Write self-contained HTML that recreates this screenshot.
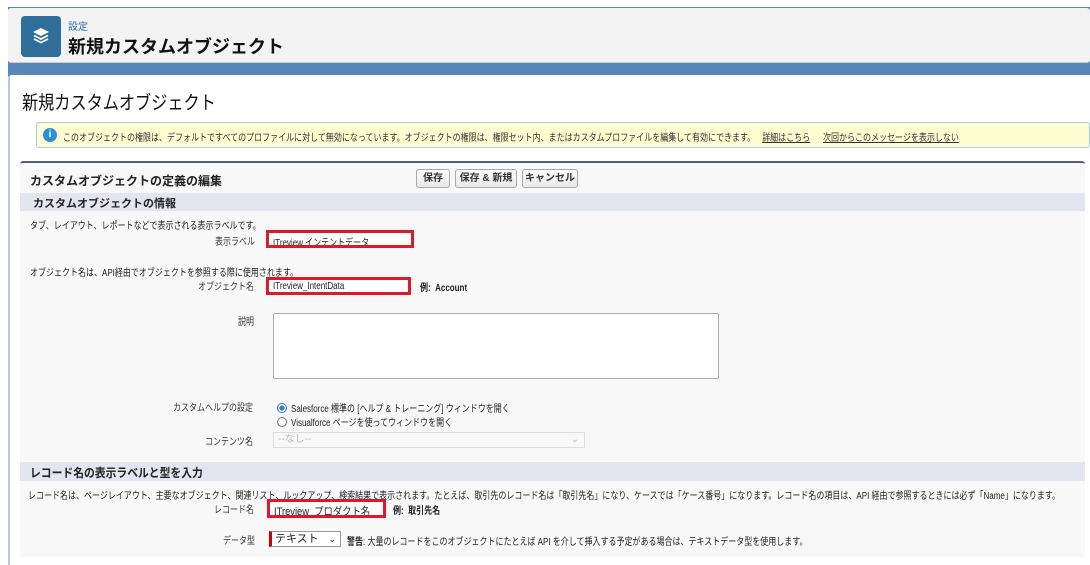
<!DOCTYPE html>
<html><head><meta charset="utf-8"><style>
*{margin:0;padding:0;box-sizing:border-box}
body{width:1090px;height:565px;overflow:hidden;background:#fff;font-family:"Liberation Sans","Noto Sans CJK JP",sans-serif;color:#222;position:relative}
.a{position:absolute;white-space:nowrap}
.s{font-size:10px;transform:scaleX(0.8);transform-origin:0 0}
.lbl{font-size:10px;text-align:right;width:200px;color:#333;transform:scaleX(0.8);transform-origin:100% 0}
.red{position:absolute;border:3px solid #e0192a;background:#fff;overflow:hidden}
.btn{position:absolute;top:169px;height:19px;border:1px solid #aaa;border-radius:3px;background:linear-gradient(#fff,#e8e8e8);font-size:10px;font-weight:bold;text-align:center;line-height:17px;color:#333;overflow:hidden}
</style></head><body>
<div class="a" style="left:8px;top:7px;width:1082px;height:70px;background:#5a87ba"></div>
<div class="a" style="left:8px;top:8px;width:1082px;height:55px;background:#f3f3f3;border-radius:3px;border-bottom:1px solid #ccc"></div>
<div class="a" style="left:21px;top:16px;width:40px;height:41px;background:#2f6d9b;border-radius:4px"></div>
<svg class="a" style="left:31px;top:26px" width="20" height="20" viewBox="0 0 20 20"><path d="M10 2 L18 6 L10 10 L2 6Z" fill="#fff"/><path d="M3 9.5 L10 13 L17 9.5" stroke="#fff" stroke-width="1.8" fill="none"/><path d="M3 13 L10 16.5 L17 13" stroke="#fff" stroke-width="1.8" fill="none"/></svg>
<div class="a" style="left:68px;top:18px;font-size:10px;color:#2a6fb0">設定</div>
<div class="a" style="left:68px;top:33px;font-size:18px;font-weight:bold;color:#111">新規カスタムオブジェクト</div>
<div class="a" style="left:8px;top:75px;width:1082px;height:490px;background:#fff;border-left:2px solid #b8c8dc;border-radius:3px 0 0 0"></div>
<div class="a" style="left:22px;top:88px;font-size:19px;color:#111;transform:scaleX(0.85);transform-origin:0 0">新規カスタムオブジェクト</div>
<div class="a" style="left:36px;top:122px;width:1054px;height:26px;background:#fdfdd2;border:1px solid #a8cbe8;border-radius:3px"></div>
<div class="a" style="left:43px;top:128px;width:14px;height:14px;border-radius:50%;background:#2d8fd8;color:#fff;font-size:10px;font-weight:bold;text-align:center;line-height:14px">i</div>
<div class="a s" style="left:63px;top:129px;color:#333">このオブジェクトの権限は、デフォルトですべてのプロファイルに対して無効になっています。オブジェクトの権限は、権限セット内、またはカスタムプロファイルを編集して有効にできます。 <span style="text-decoration:underline;margin-left:6px">詳細はこちら</span><span style="text-decoration:underline;margin-left:16px">次回からこのメッセージを表示しない</span></div>
<div class="a" style="left:20px;top:161px;width:1065px;height:396px;background:#f8f8f8;border-top:2px solid #56607a;border-radius:3px 3px 0 0"></div>
<div class="a" style="left:30px;top:172px;font-size:12px;font-weight:bold;color:#222">カスタムオブジェクトの定義の編集</div>
<div class="btn" style="left:416px;width:34px">保存</div>
<div class="btn" style="left:455px;width:62px">保存 &amp; 新規</div>
<div class="btn" style="left:522px;width:56px">キャンセル</div>
<div class="a" style="left:20px;top:193px;width:1065px;height:18px;background:#e3e6f0"></div>
<div class="a" style="left:33px;top:195px;font-size:11px;font-weight:bold">カスタムオブジェクトの情報</div>
<div class="a s" style="left:30px;top:217px">タブ、レイアウト、レポートなどで表示される表示ラベルです。</div>
<div class="a lbl" style="left:55px;top:233px">表示ラベル</div>
<div class="red" style="left:266px;top:230px;width:148px;height:18px"><div class="a s" style="left:4px;top:1px">ITreview インテントデータ</div></div>
<div class="a s" style="left:30px;top:264px">オブジェクト名は、API経由でオブジェクトを参照する際に使用されます。</div>
<div class="a lbl" style="left:54px;top:278px">オブジェクト名</div>
<div class="red" style="left:266px;top:277px;width:145px;height:18px"><div class="a s" style="left:4px;top:1px">ITreview_IntentData</div></div>
<div class="a s" style="left:420px;top:279px;font-weight:bold">例:&nbsp; Account</div>
<div class="a lbl" style="left:54px;top:313px">説明</div>
<div class="a" style="left:273px;top:313px;width:446px;height:66px;background:#fff;border:1px solid #aaa;border-radius:2px"></div>
<div class="a lbl" style="left:53px;top:399px">カスタムヘルプの設定</div>
<div class="a" style="left:277px;top:403px;width:10px;height:10px;border-radius:50%;border:1px solid #2a7fd4;background:radial-gradient(#2a7fd4 40%,#fff 50%)"></div>
<div class="a s" style="left:291px;top:400px">Salesforce 標準の [ヘルプ &amp; トレーニング] ウィンドウを開く</div>
<div class="a" style="left:277px;top:417px;width:10px;height:10px;border-radius:50%;border:1px solid #777;background:#fff"></div>
<div class="a s" style="left:291px;top:414px">Visualforce ページを使ってウィンドウを開く</div>
<div class="a lbl" style="left:53px;top:433px">コンテンツ名</div>
<div class="a" style="left:273px;top:432px;width:312px;height:16px;border:1px solid #ddd;background:#f8f8f8;font-size:10px;color:#bbb;padding-left:4px;line-height:14px">--なし--<span style="position:absolute;right:5px">⌄</span></div>
<div class="a" style="left:20px;top:462px;width:1065px;height:19px;background:#e3e6f0"></div>
<div class="a" style="left:30px;top:464px;font-size:12px;font-weight:bold;transform:scaleX(0.9);transform-origin:0 0">レコード名の表示ラベルと型を入力</div>
<div class="a s" style="left:28px;top:487px">レコード名は、ページレイアウト、主要なオブジェクト、関連リスト、ルックアップ、検索結果で表示されます。たとえば、取引先のレコード名は「取引先名」になり、ケースでは「ケース番号」になります。レコード名の項目は、API 経由で参照するときには必ず「Name」になります。</div>
<div class="a lbl" style="left:54px;top:501px">レコード名</div>
<div class="red" style="left:267px;top:499px;width:119px;height:19px"><div class="a" style="left:4px;top:1px;font-size:11px;transform:scaleX(0.85);transform-origin:0 0">ITreview_プロダクト名</div></div>
<div class="a s" style="left:393px;top:502px;font-weight:bold">例:&nbsp; 取引先名</div>
<div class="a lbl" style="left:55px;top:532px">データ型</div>
<div class="a" style="left:269px;top:531px;width:72px;height:16px;border:1px solid #999;border-left:3px solid #c00;background:#fff;font-size:11px;padding-left:3px;line-height:14px">テキスト<span style="position:absolute;right:4px;font-size:9px">⌄</span></div>
<div class="a s" style="left:347px;top:533px"><b>警告</b>: 大量のレコードをこのオブジェクトにたとえば API を介して挿入する予定がある場合は、テキストデータ型を使用します。</div>
</body></html>
